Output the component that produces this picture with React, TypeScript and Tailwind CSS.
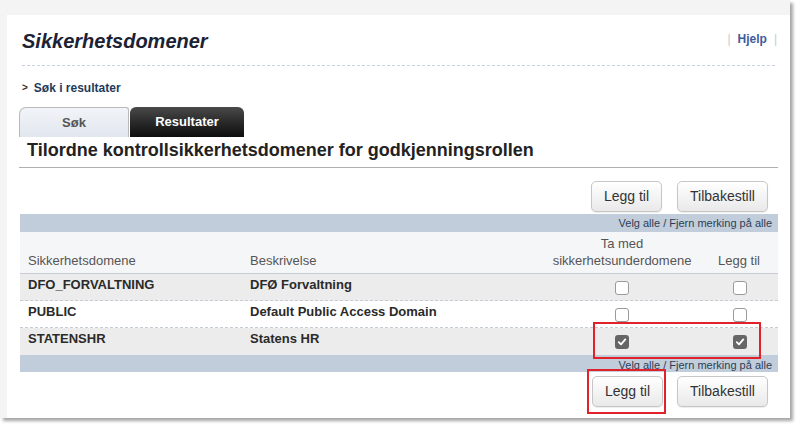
import { Fragment } from 'react';

interface Domain {
  name: string;
  description: string;
  includeSub: boolean;
  add: boolean;
}

const domains: Domain[] = [
  { name: 'DFO_FORVALTNING', description: 'DFØ Forvaltning', includeSub: false, add: false },
  { name: 'PUBLIC', description: 'Default Public Access Domain', includeSub: false, add: false },
  { name: 'STATENSHR', description: 'Statens HR', includeSub: true, add: true },
];

function Checkbox({ checked }: { checked: boolean }) {
  if (checked) {
    return (
      <span className="flex h-[14px] w-[14px] items-center justify-center rounded-[3px] bg-[#666]">
        <svg width="10" height="10" viewBox="0 0 10 10">
          <path d="M1.8 5.2 L4 7.4 L8.3 2.4" fill="none" stroke="#fff" strokeWidth="1.8" strokeLinecap="round" strokeLinejoin="round" />
        </svg>
      </span>
    );
  }
  return <span className="block h-[14px] w-[14px] rounded-[3px] border border-[#9a9a9a] bg-white" />;
}

function Button({ label, width }: { label: string; width: string }) {
  return (
    <button
      className={`${width} h-[31px] rounded-[5px] border border-[#c6c6c6] bg-gradient-to-b from-white to-[#e9e9e9] text-[14px] text-[#333] shadow-[0_1px_1px_rgba(0,0,0,0.08)]`}
    >
      {label}
    </button>
  );
}

function SelectAllBar() {
  return (
    <div className="flex h-[17px] items-end justify-end bg-[#c1cddb] pr-[6px] text-[11px] leading-[14px] text-[#2c3e55]">
      Velg alle / Fjern merking på alle
    </div>
  );
}

export default function App() {
  return (
    <div className="relative h-[427px] w-[800px] overflow-hidden bg-white font-['Liberation_Sans',Arial,sans-serif]">
      <div className="h-[418px] w-[790px] bg-[#f4f4f4] pl-[7px] pt-[15px] shadow-[3px_3px_3px_rgba(0,0,0,0.35)]">
        <div className="h-full bg-white px-[12px] pt-[14px]">
          {/* header */}
          <div className="flex items-start justify-between pl-[3px]">
            <h1 className="text-[20px] font-bold italic leading-[24px] text-[#1b2235]">Sikkerhetsdomener</h1>
            <div className="mt-[2px] flex items-center gap-[7px] pr-[1px] text-[12px] leading-[16px]">
              <span className="text-[#c3cbd6]">|</span>
              <span className="font-bold text-[#3d5c9c]">Hjelp</span>
              <span className="text-[#c3cbd6]">|</span>
            </div>
          </div>
          <div className="mx-[3px] mt-[12px] border-t border-dashed border-[#c8d2de]" />
          <div className="mt-[14px] flex items-center gap-[6px] pl-[3px] text-[12px] font-bold leading-[16px] text-[#1d3a5c]">
            <span className="text-[10px] text-[#333]">&gt;</span>
            <span>Søk i resultater</span>
          </div>

          {/* tabs */}
          <div className="mt-[11px] flex h-[30px] items-stretch">
            <div className="flex w-[110px] items-center justify-center rounded-tl-[7px] rounded-tr-[3px] border border-b-0 border-[#b9b9b9] bg-gradient-to-b from-[#f1f4f8] to-[#e1e7ee] text-[13px] font-bold text-[#555]">
              Søk
            </div>
            <div className="ml-[1px] flex w-[114px] items-center justify-center rounded-t-[6px] bg-gradient-to-b from-[#4a4a4a] to-[#0e0e0e] text-[13px] font-bold text-white">
              Resultater
            </div>
          </div>

          {/* section heading */}
          <div className="mt-[2px] border-b border-[#b0b0b0] pb-[6px] pl-[8px] text-[18px] font-bold leading-[22px] text-[#222]">
            Tilordne kontrollsikkerhetsdomener for godkjenningsrollen
          </div>

          <div className="mt-[13px] flex justify-end gap-[15px] pr-[10px]">
            <Button label="Legg til" width="w-[71px]" />
            <Button label="Tilbakestill" width="w-[91px]" />
          </div>

          {/* table */}
          <div className="ml-[1px] mt-[2px]">
            <div className="flex h-[18px] items-center justify-end bg-[#c1cddb] pr-[6px] text-[11px] text-[#2c3e55]">
              Velg alle / Fjern merking på alle
            </div>
            <div className="grid grid-cols-[222px_304px_152px_80px] text-[13px] leading-[16px]">
              <div className="col-span-4 grid h-[42px] grid-cols-subgrid items-end border-b border-[#c9cdd3] bg-[#f5f6f8] pb-[4px] text-[#555]">
                <div className="pl-[8px]">Sikkerhetsdomene</div>
                <div className="pl-[8px]">Beskrivelse</div>
                <div className="text-center leading-[17px]">
                  Ta med
                  <br />
                  sikkerhetsunderdomene
                </div>
                <div className="pl-[2px] text-center">Legg til</div>
              </div>
              {domains.map((d, index) => (
                <Fragment key={d.name}>
                  <div
                    className={`col-span-4 grid h-[27px] grid-cols-subgrid items-start ${
                      index % 2 === 0 ? 'bg-[#ececec]' : 'bg-white'
                    } ${index < domains.length - 1 ? 'border-b border-dashed border-[#c6ccd4]' : ''}`}
                  >
                    <div className="pl-[8px] pt-[3px] font-bold text-[#2a2a2a]">{d.name}</div>
                    <div className="pl-[8px] pt-[3px] font-bold text-[#2a2a2a]">{d.description}</div>
                    <div className="flex justify-center pt-[7px]">
                      <Checkbox checked={d.includeSub} />
                    </div>
                    <div className="flex justify-center pl-[4px] pt-[7px]">
                      <Checkbox checked={d.add} />
                    </div>
                  </div>
                </Fragment>
              ))}
            </div>
            <SelectAllBar />
          </div>

          <div className="mt-[4px] flex justify-end gap-[14px] pr-[10px]">
            <Button label="Legg til" width="w-[71px]" />
            <Button label="Tilbakestill" width="w-[91px]" />
          </div>
        </div>
      </div>

      {/* annotations */}
      <div className="absolute left-[593px] top-[322px] h-[37px] w-[168px] border-2 border-[#e2222b]" />
      <div className="absolute left-[587px] top-[369px] h-[45px] w-[79px] border-2 border-[#e2222b]" />
    </div>
  );
}
